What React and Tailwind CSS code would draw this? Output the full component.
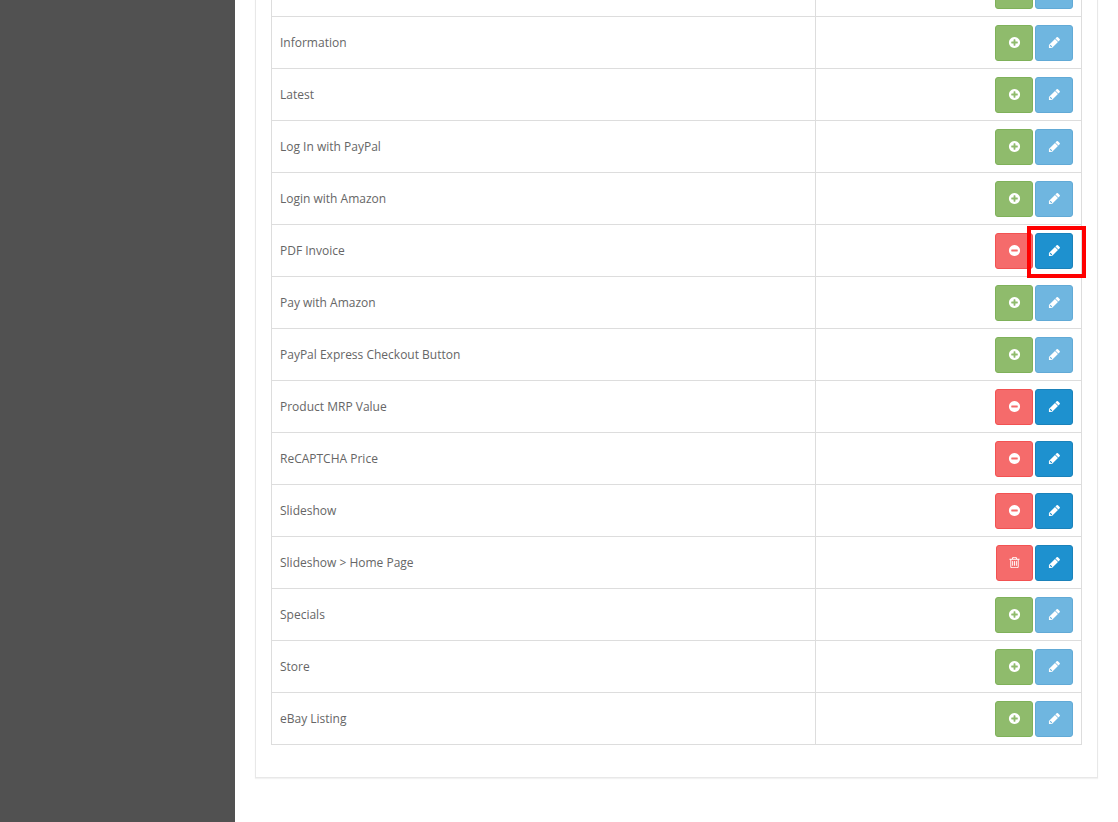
const paths = {
  plus: "M1344 960v-128q0-26-19-45t-45-19h-256v-256q0-26-19-45t-45-19h-128q-26 0-45 19t-19 45v256h-256q-26 0-45 19t-19 45v128q0 26 19 45t45 19h256v256q0 26 19 45t45 19h128q26 0 45-19t19-45v-256h256q26 0 45-19t19-45zm320-64q0 209-103 385.5t-279.5 279.5-385.5 103-385.5-103-279.5-279.5-103-385.5 103-385.5 279.5-279.5 385.5-103 385.5 103 279.5 279.5 103 385.5z",
  minus: "M1344 960v-128q0-26-19-45t-45-19h-768q-26 0-45 19t-19 45v128q0 26 19 45t45 19h768q26 0 45-19t19-45zm320-64q0 209-103 385.5t-279.5 279.5-385.5 103-385.5-103-279.5-279.5-103-385.5 103-385.5 279.5-279.5 385.5-103 385.5 103 279.5 279.5 103 385.5z",
  pencil: "M491 1536l91-91-235-235-91 91v107h128v128h107zM960 416l416 416-832 832h-416v-416zM1643 512q0 53-37 90l-166 166-416-416 166-165q36-38 90-38 53 0 91 38l235 234q37 39 37 91z",
  trash: "M704 736v576q0 14-9 23t-23 9h-64q-14 0-23-9t-9-23v-576q0-14 9-23t23-9h64q14 0 23 9t9 23zm256 0v576q0 14-9 23t-23 9h-64q-14 0-23-9t-9-23v-576q0-14 9-23t23-9h64q14 0 23 9t9 23zm256 0v576q0 14-9 23t-23 9h-64q-14 0-23-9t-9-23v-576q0-14 9-23t23-9h64q14 0 23 9t9 23zm128 724v-948h-896v948q0 22 7 40.5t14.5 27 10.5 8.5h832q3 0 10.5-8.5t14.5-27 7-40.5zm-672-1076h448l-48-117q-7-9-17-11h-317q-10 2-17 11zm928 32v64q0 14-9 23t-23 9h-96v948q0 83-47 143.5t-113 60.5h-832q-66 0-113-58.5t-47-141.5v-952h-96q-14 0-23-9t-9-23v-64q0-14 9-23t23-9h309l70-167q15-37 54-63t79-26h320q40 0 79 26t54 63l70 167h309q14 0 23 9t9 23z",
};

const tones = {
  success: "w-[38px] bg-[#8fbb6c] border-[#7fb15a]",
  danger: "w-[38px] bg-[#f56b6b] border-[#f25252]",
  remove: "w-[37px] bg-[#f56b6b] border-[#f25252]",
  primary: "w-[38px] bg-[#1e91cf] border-[#1b82ba]",
  muted: "w-[38px] bg-[#6fb6e0] border-[#62aad6]",
};

const rows = [
  ["", "install"],
  ["Information", "install"],
  ["Latest", "install"],
  ["Log In with PayPal", "install"],
  ["Login with Amazon", "install"],
  ["PDF Invoice", "installed", true],
  ["Pay with Amazon", "install"],
  ["PayPal Express Checkout Button", "install"],
  ["Product MRP Value", "installed"],
  ["ReCAPTCHA Price", "installed"],
  ["Slideshow", "installed"],
  ["Slideshow > Home Page", "instance"],
  ["Specials", "install"],
  ["Store", "install"],
  ["eBay Listing", "install"],
];

const actions = {
  install: { tone: "success", icon: "plus", label: "Install" },
  installed: { tone: "danger", icon: "minus", label: "Uninstall" },
  instance: { tone: "remove", icon: "trash", label: "Delete" },
};

function IconButton({ tone, icon, label, disabled }) {
  return (
    <button
      type="button"
      aria-label={label}
      disabled={disabled}
      className={`flex h-9 items-center justify-center rounded-[3px] border text-white ${tones[tone]}`}
    >
      <svg viewBox="0 0 1792 1792" className="size-[13px]" fill="currentColor" aria-hidden="true">
        <path fillRule="evenodd" d={paths[icon]} />
      </svg>
    </button>
  );
}

function ModuleRow({ name, state, highlighted }) {
  const action = actions[state];
  const locked = state === "install";
  return (
    <tr className="h-[52px]">
      <td className="border border-[#dddddd] px-2 py-0 align-middle">{name}</td>
      <td className="border border-[#dddddd] px-2 py-0 align-middle">
        <div className="flex justify-end gap-0.5">
          <IconButton tone={action.tone} icon={action.icon} label={`${action.label} ${name}`} />
          <div className="relative">
            <IconButton tone={locked ? "muted" : "primary"} icon="pencil" label={`Edit ${name}`} disabled={locked} />
            {highlighted && (
              <span className="pointer-events-none absolute -top-[7px] -right-[13px] -bottom-[9px] -left-2 border-4 border-[#ff0000]" />
            )}
          </div>
        </div>
      </td>
    </tr>
  );
}

export default function App() {
  return (
    <div className="flex h-screen overflow-hidden bg-white font-['Open_Sans','Noto_Sans',sans-serif] text-[12px] leading-[17px] text-[#666666]">
      <aside className="w-[235px] shrink-0 bg-[#515151]" />
      <main className="min-w-0 flex-1 overflow-hidden px-5">
        <section className="-mt-9 border border-t-0 border-[#e8e8e8] px-[15px] pb-8 shadow-[0_1px_1px_rgba(0,0,0,0.05)]">
          <table className="w-full table-fixed border-collapse">
            <colgroup>
              <col />
              <col className="w-[266px]" />
            </colgroup>
            <tbody>
              {rows.map(([name, state, highlighted], index) => (
                <ModuleRow key={index} name={name} state={state} highlighted={highlighted} />
              ))}
            </tbody>
          </table>
        </section>
      </main>
    </div>
  );
}
